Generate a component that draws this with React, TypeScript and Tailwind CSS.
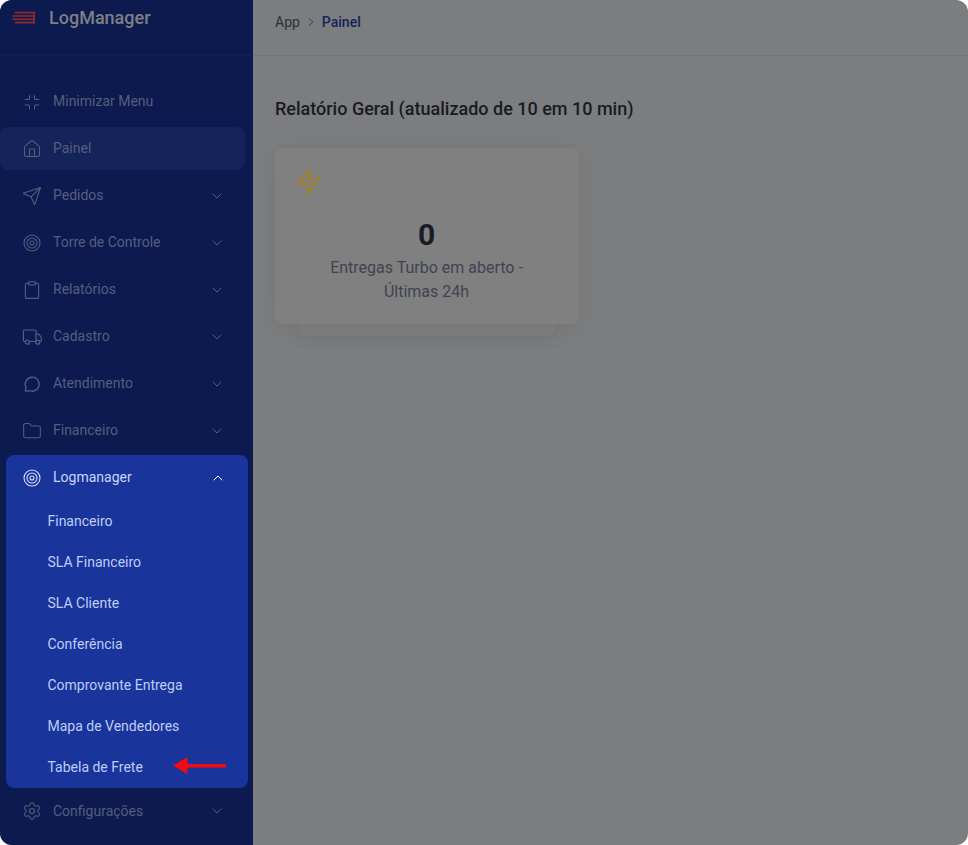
import React from "react";
import { Home, Send, Clipboard, Folder, ChevronDown, ChevronUp, Settings, ChevronRight } from "lucide-react";

function Target({ className }: { className?: string }) {
  return (
    <svg viewBox="0 0 24 24" width="20" height="20" fill="none" stroke="currentColor" strokeWidth="1.3" className={className}>
      <circle cx="12" cy="12" r="9.6" />
      <circle cx="12" cy="12" r="6" />
      <circle cx="12" cy="12" r="2.4" />
    </svg>
  );
}

function Minimize({ className }: { className?: string }) {
  return (
    <svg viewBox="0 0 20 20" width="20" height="20" fill="none" stroke="currentColor" strokeWidth="1.1" strokeLinecap="round" className={className}>
      <path d="M7.5 3.5v3a1 1 0 0 1-1 1H3.2" />
      <path d="M12.5 3.5v3a1 1 0 0 0 1 1h3.3" />
      <path d="M7.5 17v-3a1 1 0 0 0-1-1H3.2" />
      <path d="M12.5 17v-3a1 1 0 0 1 1-1h3.3" />
    </svg>
  );
}

function TruckIcon({ className }: { className?: string }) {
  return (
    <svg viewBox="0 0 20 18" width="20" height="18" fill="none" stroke="currentColor" strokeWidth="1.2" strokeLinejoin="round" className={className}>
      <path d="M3.2 13.5H2.6a1.2 1.2 0 0 1-1.2-1.2V3.2A1.2 1.2 0 0 1 2.6 2h10.2A1.2 1.2 0 0 1 14 3.2v10.3H7.6" />
      <path d="M14 6.2h2.4c.4 0 .7.2.9.5l1.9 2.8v3.6c0 .2-.2.4-.4.4h-.4" />
      <circle cx="5.4" cy="14.2" r="2" />
      <circle cx="15.8" cy="14.2" r="2" />
    </svg>
  );
}

function Chat({ className }: { className?: string }) {
  return (
    <svg viewBox="0 0 20 20" width="20" height="20" fill="none" stroke="currentColor" strokeWidth="1.3" strokeLinejoin="round" className={className}>
      <path d="M4.2 17.2c1.2.1 2.2-.2 2.9-.7a7 7 0 1 0-3.4-3.6c.3 1 .2 2.6-.4 3.6-.2.4.3.7.9.7z" />
    </svg>
  );
}

function Logo() {
  return (
    <svg width="24" height="14" viewBox="0 0 24 14" className="shrink-0">
      <g fill="#8a2a2e">
        <rect x="3" y="0.8" width="20" height="1.8" rx="0.4" />
        <rect x="0.5" y="4.2" width="22.5" height="1.6" />
        <rect x="0.5" y="7.4" width="22.5" height="1.6" />
        <rect x="3" y="10.6" width="20" height="1.9" rx="0.4" />
        <rect x="21.2" y="1" width="1.8" height="11" />
      </g>
    </svg>
  );
}

type Item = { label: string; icon: React.ReactNode; chevron?: boolean; active?: boolean };

const icon = "w-5 h-5";
const topItems: Item[] = [
  { label: "Minimizar Menu", icon: <Minimize /> },
  { label: "Painel", icon: <Home className={icon} strokeWidth={1.3} />, active: true },
  { label: "Pedidos", icon: <Send className={icon} strokeWidth={1.3} />, chevron: true },
  { label: "Torre de Controle", icon: <Target />, chevron: true },
  { label: "Relatórios", icon: <Clipboard className={icon} strokeWidth={1.3} />, chevron: true },
  { label: "Cadastro", icon: <TruckIcon />, chevron: true },
  { label: "Atendimento", icon: <Chat />, chevron: true },
  { label: "Financeiro", icon: <Folder className={icon} strokeWidth={1.3} />, chevron: true },
];

const subItems = ["Financeiro", "SLA Financeiro", "SLA Cliente", "Conferência", "Comprovante Entrega", "Mapa de Vendedores", "Tabela de Frete"];

function Row({ item }: { item: Item }) {
  return (
    <div className={`flex h-[43px] w-[245px] items-center rounded-lg pl-[22px] pr-[20px] text-[#555d7c] ${item.active ? "bg-[#14235a]" : ""}`}>
      <span className="flex w-5 justify-center">{item.icon}</span>
      <span className="ml-[11px] flex-1 pb-[1px] text-sm text-[#565e7d]">{item.label}</span>
      {item.chevron && <ChevronDown className="h-4 w-4 text-[#565e7d]" strokeWidth={1.5} />}
    </div>
  );
}

export default function App() {
  return (
    <div className="h-[845px] w-[968px] bg-white font-['Roboto',sans-serif]">
      <div className="flex h-full w-full overflow-hidden rounded-[12px] bg-[#7c7d7e]">
        <aside className="h-full w-[253px] shrink-0 bg-[#0c1a50]">
          <div className="flex h-[56px] items-start border-b border-[#111f55] pl-[12px]">
            <div className="mt-[10px] flex items-center">
              <Logo />
              <span className="ml-[13px] text-lg font-medium leading-4 text-[#7d7f84]">LogManager</span>
            </div>
          </div>
          <div className="flex flex-col gap-1 pt-[24px]">
            {topItems.map((i) => (
              <Row key={i.label} item={i} />
            ))}
          </div>
          <div className="ml-[6px] mt-[3px] w-[242px] rounded-lg bg-[#19349b] pb-[1px]">
            <div className="flex h-[45px] items-center pl-4 pr-[22px] text-[#cbd5fb]">
              <span className="flex w-5 justify-center text-[#dbe3ff]"><Target /></span>
              <span className="ml-[11px] flex-1 pb-[1px] text-sm">Logmanager</span>
              <ChevronUp className="h-4 w-4 text-white" strokeWidth={1.5} />
            </div>
            {subItems.map((s) => (
              <div key={s} className="relative flex h-[41px] items-center pl-[41.5px] text-sm text-[#bfcdf8]">
                {s}
                {s === "Tabela de Frete" && (
                  <svg width="54" height="17" viewBox="0 0 54 17" className="absolute left-[167px] top-[11px]">
                    <path d="M0 8.5 14.5 0v7H53v3.4H14.5V17z" fill="#f50a10" />
                  </svg>
                )}
              </div>
            ))}
          </div>
          <div className="mt-[1.5px] flex h-[43px] items-center pl-[22px] pr-[28px] text-[#565e7d]">
            <Settings className="h-5 w-5" strokeWidth={1.3} />
            <span className="ml-[11px] flex-1 text-sm">Configurações</span>
            <ChevronDown className="h-4 w-4" strokeWidth={1.5} />
          </div>
        </aside>
        <main className="min-w-0 flex-1">
          <div className="flex h-[56px] items-start border-b border-[#6f7477] pl-[22px] pt-[14px] text-sm leading-4">
            <span className="text-[#2d3038]">App</span>
            <ChevronRight className="mx-[4px] mt-[1px] h-[14px] w-[14px] text-[#2d3038]" strokeWidth={1.5} />
            <span className="font-medium text-[#14235f]">Painel</span>
          </div>
          <div className="pl-[22px]">
            <h1 className="mt-[42px] text-lg font-medium leading-[22px] text-[#181b22]">Relatório Geral (atualizado de 10 em 10 min)</h1>
            <div className="relative mt-[28px] w-[304px]">
              <div className="absolute -bottom-3 left-[23px] right-[24px] h-6 rounded-lg bg-[#7f7f7f] shadow-[0_6px_16px_rgba(0,0,0,0.05)]" />
              <div className="relative h-[176px] rounded-lg bg-[#808080] pl-[19px] pr-5 pt-[19px] text-center shadow-[0_4px_24px_rgba(0,0,0,0.07)]">
                <svg width="29" height="29" viewBox="0 0 24 24" fill="none" stroke="#a8801c" strokeWidth="1.4" strokeLinejoin="round" className="block">
                  <polygon points="13 2 3 14 12 14 11 22 21 10 12 10 13 2" />
                </svg>
                <div className="mt-[21px] text-[30px] font-bold leading-9 text-[#181c25]">0</div>
                <div className="mt-[3px] text-base leading-6 text-[#3e4350]">Entregas Turbo em aberto -<br />Últimas 24h</div>
              </div>
            </div>
          </div>
        </main>
      </div>
    </div>
  );
}
